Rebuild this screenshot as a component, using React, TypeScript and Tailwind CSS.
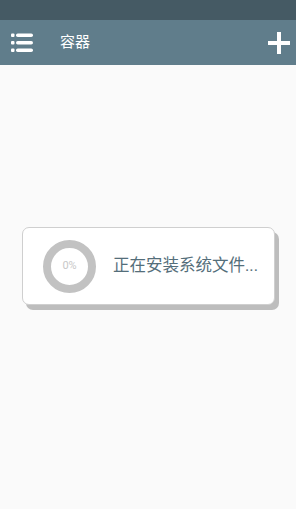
import React from 'react'

const font = { fontFamily: '"Roboto", "Noto Sans CJK SC", sans-serif' }

export default function App() {
  return (
    <div className="flex min-h-[509px] w-[296px] flex-col bg-[#fafafa]" style={font}>
      {/* status bar */}
      <div className="h-[20px] bg-[#455a64]" />

      {/* toolbar */}
      <div className="flex h-[45px] items-center bg-[#607d8b] pl-[11px] pr-[6px]">
        <svg width="22" height="20" viewBox="0 0 22 20" className="shrink-0">
          <g fill="#fff">
            <rect x="0" y="0.5" width="3.5" height="3.5" rx="1" />
            <rect x="0" y="8" width="3.5" height="3.5" rx="1" />
            <rect x="0" y="15.5" width="3.5" height="3.5" rx="1" />
            <rect x="5" y="0.5" width="17" height="3.5" rx="1.75" />
            <rect x="5" y="8" width="17" height="3.5" rx="1.75" />
            <rect x="5" y="15.5" width="17" height="3.5" rx="1.75" />
          </g>
        </svg>
        <span className="ml-[27px] text-[15px] text-white">容器</span>
        <svg width="22" height="22" viewBox="0 0 22 22" className="ml-auto shrink-0">
          <rect x="9" y="0" width="4" height="22" fill="#fff" />
          <rect x="0" y="9" width="22" height="4" fill="#fff" />
        </svg>
      </div>

      {/* content */}
      <div className="flex-1 pt-[162px] pl-[22px]">
        <div className="flex h-[78px] w-[253px] items-center rounded-[7px] border border-[#cfcfcf] bg-white pl-[20px] shadow-[4px_5px_0_#bdbdbd]">
          <div className="flex h-[53px] w-[53px] shrink-0 items-center justify-center rounded-full border-[8px] border-[#c2c2c2]">
            <span className="text-[11px] text-[#c8c8c8]">0%</span>
          </div>
          <span className="ml-[17px] text-[16.5px] text-[#546e7a]">正在安装系统文件...</span>
        </div>
      </div>
    </div>
  )
}
